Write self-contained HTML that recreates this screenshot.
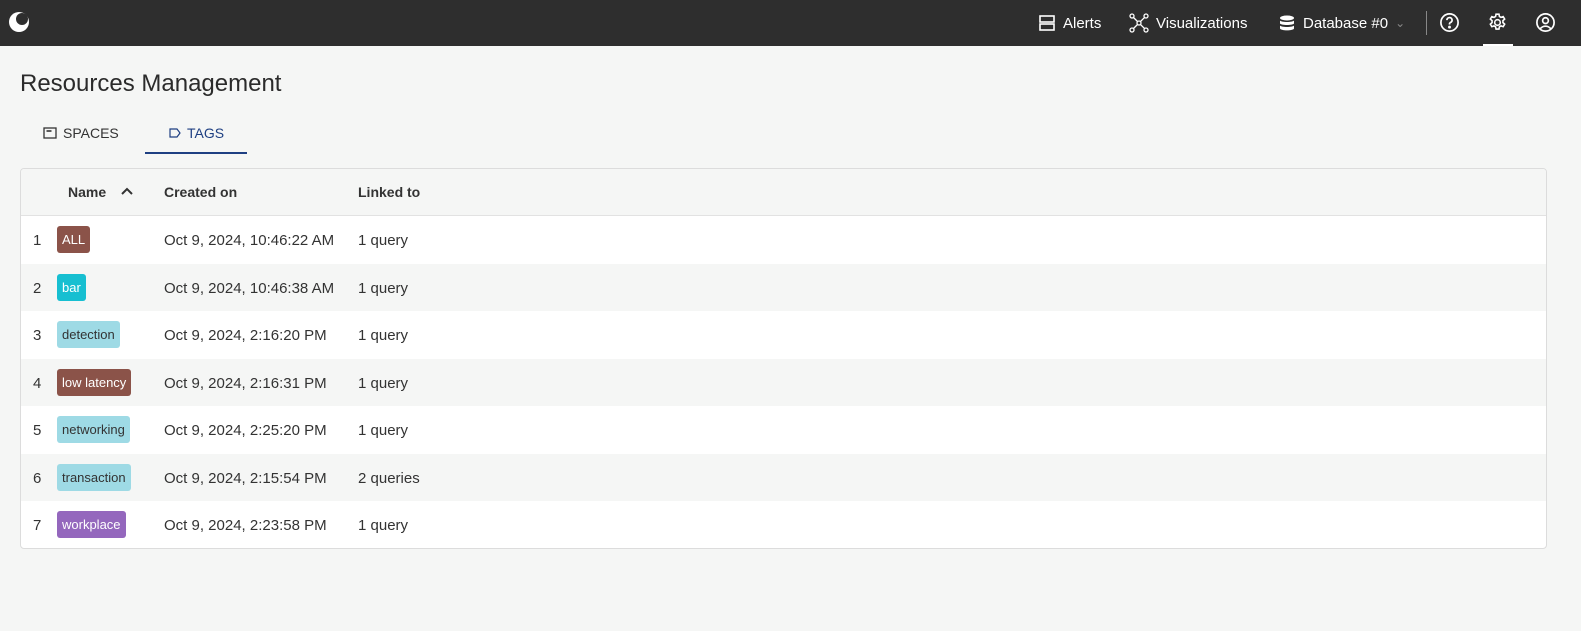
<!DOCTYPE html>
<html><head><style>
*{box-sizing:border-box;margin:0;padding:0}
body{width:1581px;height:631px;background:#f5f6f5;font-family:"Liberation Sans",Roboto,sans-serif;color:#333;overflow:hidden;position:relative}
.nav{position:absolute;left:0;top:0;width:1581px;height:46px;background:#2e2e2e;color:#fff;font-size:15px}
.nav .it{position:absolute;top:0;height:46px;display:flex;align-items:center;gap:7px}
h1{position:absolute;left:20px;top:70px;font-size:24px;font-weight:normal;color:#2b2b2b}
.tab{position:absolute;top:125px;font-size:14px;display:flex;align-items:center;gap:6px}
.card{position:absolute;left:20px;top:168px;width:1527px;height:381px;background:#fff;border:1px solid #dcdcdc;border-radius:4px;overflow:hidden}
.hd{height:47px;background:#f5f6f5;border-bottom:1px solid #e2e2e2;position:relative;font-size:14px;font-weight:bold;color:#333}
.hd span{position:absolute;top:15px}
.row{height:47.5px;position:relative;font-size:15px}
.row.g{background:#f5f6f5}
.row span{position:absolute;top:16px}
.tag{position:absolute;left:36px;top:10px;height:27px;padding:0 5px;border-radius:3px;font-size:13px;line-height:27px}
</style></head><body>
<div class="nav">
 <svg style="position:absolute;left:7px;top:10px" width="24" height="24" viewBox="0 0 24 24"><circle cx="12" cy="12" r="10" fill="#fff"/><circle cx="15" cy="9" r="6" fill="#2e2e2e"/></svg>
 <div class="it" style="left:1038px"><svg width="18" height="18" viewBox="0 0 18 18" fill="none" stroke="#fff" stroke-width="1.6"><rect x="2" y="2" width="14" height="6"/><rect x="2" y="10" width="14" height="6"/></svg>Alerts</div>
 <div class="it" style="left:1129px"><svg width="20" height="20" viewBox="0 0 20 20" fill="none" stroke="#fff" stroke-width="1.3"><circle cx="3" cy="3" r="2"/><circle cx="17" cy="3" r="2"/><circle cx="3" cy="17" r="2"/><circle cx="17" cy="17" r="2"/><circle cx="10" cy="10" r="2"/><path d="M4.5 4.5 8.5 8.5M15.5 4.5 11.5 8.5M4.5 15.5 8.5 11.5M15.5 15.5 11.5 11.5"/></svg>Visualizations</div>
 <div class="it" style="left:1278px"><svg width="18" height="18" viewBox="0 0 18 18" fill="#fff"><ellipse cx="9" cy="4" rx="7" ry="2.5"/><path d="M2 6.5c1 2 13 2 14 0v3c-1 2-13 2-14 0z"/><path d="M2 11.5c1 2 13 2 14 0v3c-1 2.5-13 2.5-14 0z"/></svg>Database #0 <span style="color:#888;font-size:12px">&#8964;</span></div>
 <div style="position:absolute;left:1426px;top:11px;width:1px;height:24px;background:#888"></div>
 <svg style="position:absolute;left:1439px;top:12px" width="21" height="21" viewBox="0 0 22 22" fill="none" stroke="#fff" stroke-width="1.8"><circle cx="11" cy="11" r="9"/><path d="M8.3 8.5a2.7 2.7 0 1 1 3.5 2.6c-.6.3-.8.7-.8 1.4v.6"/><circle cx="11" cy="15.8" r=".6" fill="#fff"/></svg>
 <svg style="position:absolute;left:1487px;top:12px" width="21" height="21" viewBox="0 0 24 24" fill="none" stroke="#fff" stroke-width="1.8"><circle cx="12" cy="12" r="3.2"/><path d="M10.3 2.5h3.4l.5 2.6 1.8 1 2.5-.9 1.7 2.9-2 1.8v2.2l2 1.8-1.7 2.9-2.5-.9-1.8 1-.5 2.6h-3.4l-.5-2.6-1.8-1-2.5.9-1.7-2.9 2-1.8v-2.2l-2-1.8 1.7-2.9 2.5.9 1.8-1z"/></svg>
 <div style="position:absolute;left:1483px;top:44px;width:30px;height:2px;background:#fff"></div>
 <svg style="position:absolute;left:1535px;top:12px" width="21" height="21" viewBox="0 0 22 22" fill="none" stroke="#fff" stroke-width="1.8"><circle cx="11" cy="11" r="9"/><circle cx="11" cy="9" r="3"/><path d="M5.5 17.5c3-3.5 8-3.5 11 0"/></svg>
</div>
<h1>Resources Management</h1>
<div class="tab" style="left:43px;color:#333"><svg width="14" height="12" viewBox="0 0 14 12" fill="none" stroke="#333" stroke-width="1.3"><rect x="1" y="1" width="12" height="10"/><path d="M3.5 4h5" stroke-width="1.6"/></svg>SPACES</div>
<div class="tab" style="left:169px;color:#1e3f82"><svg width="12" height="10" viewBox="0 0 12 10" fill="none" stroke="#1e3f82" stroke-width="1.2"><path d="M1 1h7l3 4-3 4H1z"/></svg>TAGS</div>
<div style="position:absolute;left:145px;top:152px;width:102px;height:2px;background:#1e3f82"></div>
<div class="card">
 <div class="hd"><span style="left:47px">Name</span><svg style="position:absolute;left:100px;top:18px" width="12" height="8" viewBox="0 0 12 8" fill="none" stroke="#333" stroke-width="2"><path d="M1 7 6 2l5 5"/></svg><span style="left:143px">Created on</span><span style="left:337px">Linked to</span></div>
 <div class="row"><span style="left:12px">1</span><div class="tag" style="background:#8b5349;color:#fff">ALL</div><span style="left:143px">Oct 9, 2024, 10:46:22 AM</span><span style="left:337px">1 query</span></div>
 <div class="row g"><span style="left:12px">2</span><div class="tag" style="background:#17bfd1;color:#fff">bar</div><span style="left:143px">Oct 9, 2024, 10:46:38 AM</span><span style="left:337px">1 query</span></div>
 <div class="row"><span style="left:12px">3</span><div class="tag" style="background:#9edae5;color:#333">detection</div><span style="left:143px">Oct 9, 2024, 2:16:20 PM</span><span style="left:337px">1 query</span></div>
 <div class="row g"><span style="left:12px">4</span><div class="tag" style="background:#8b5349;color:#fff">low latency</div><span style="left:143px">Oct 9, 2024, 2:16:31 PM</span><span style="left:337px">1 query</span></div>
 <div class="row"><span style="left:12px">5</span><div class="tag" style="background:#9edae5;color:#333">networking</div><span style="left:143px">Oct 9, 2024, 2:25:20 PM</span><span style="left:337px">1 query</span></div>
 <div class="row g"><span style="left:12px">6</span><div class="tag" style="background:#9edae5;color:#333">transaction</div><span style="left:143px">Oct 9, 2024, 2:15:54 PM</span><span style="left:337px">2 queries</span></div>
 <div class="row"><span style="left:12px">7</span><div class="tag" style="background:#9467bd;color:#fff">workplace</div><span style="left:143px">Oct 9, 2024, 2:23:58 PM</span><span style="left:337px">1 query</span></div>
</div>
</body></html>
